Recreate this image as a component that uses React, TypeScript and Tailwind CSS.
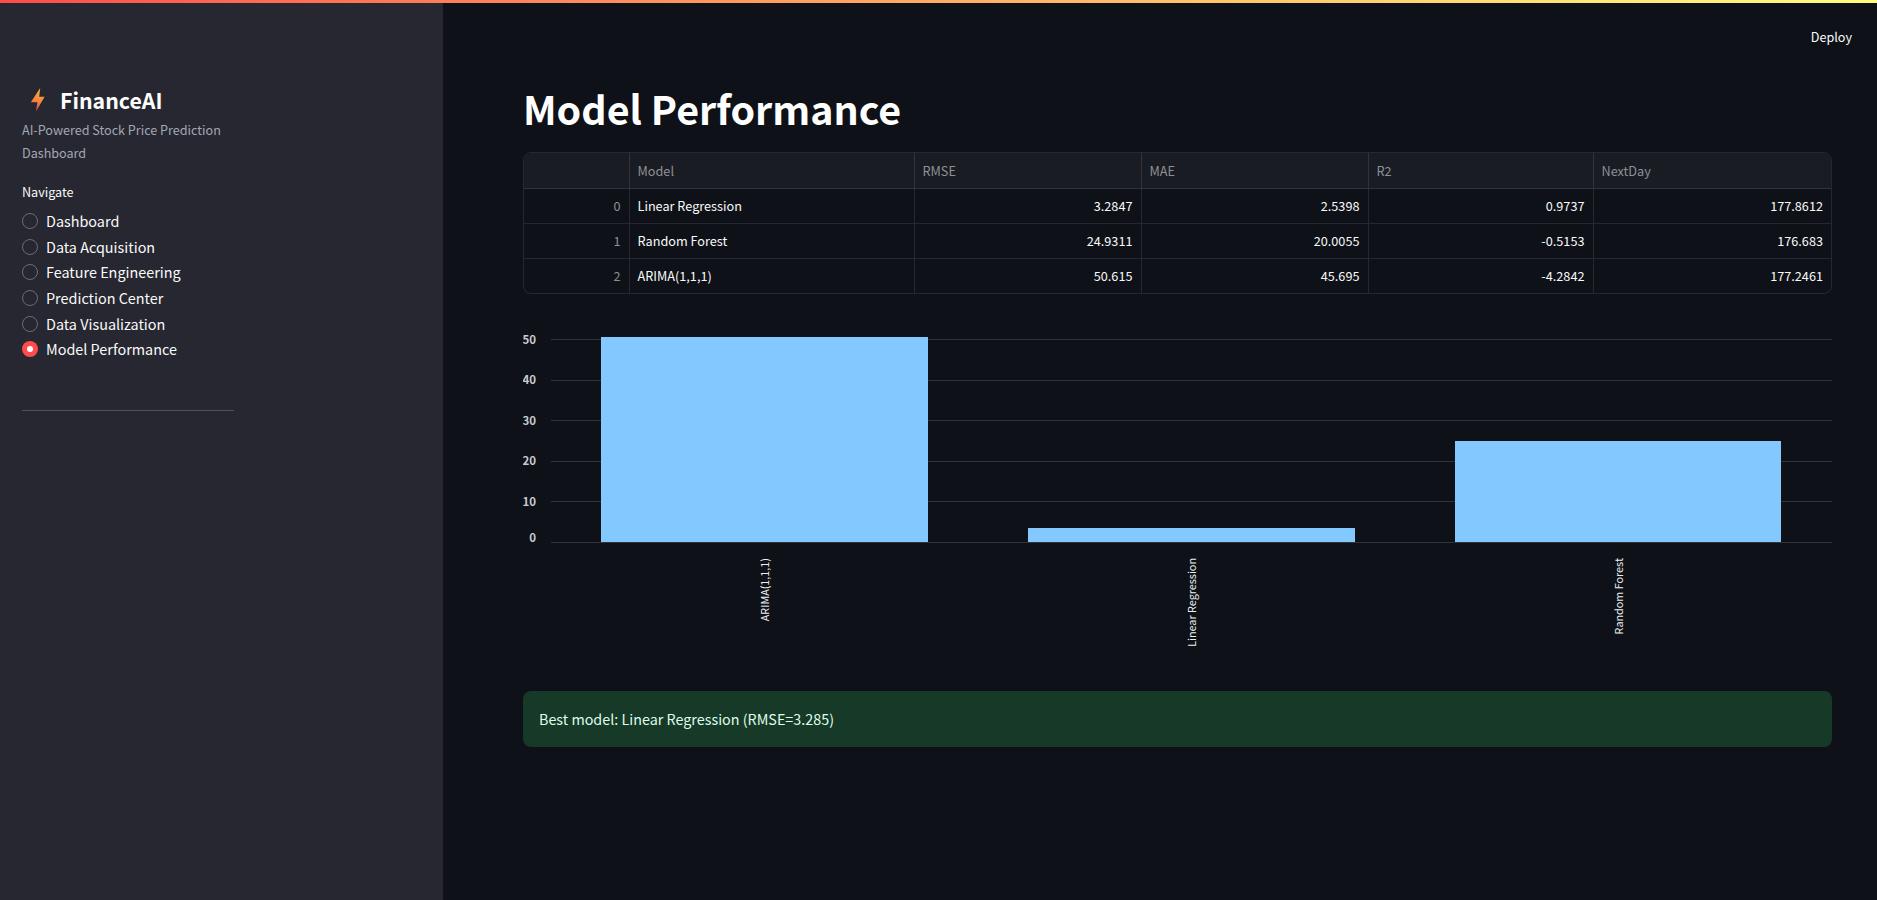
import React from 'react';

const navItems = ['Dashboard', 'Data Acquisition', 'Feature Engineering', 'Prediction Center', 'Data Visualization', 'Model Performance'];

const rows = [
  { id: 0, model: 'Linear Regression', rmse: '3.2847', mae: '2.5398', r2: '0.9737', next: '177.8612' },
  { id: 1, model: 'Random Forest', rmse: '24.9311', mae: '20.0055', r2: '-0.5153', next: '176.683' },
  { id: 2, model: 'ARIMA(1,1,1)', rmse: '50.615', mae: '45.695', r2: '-4.2842', next: '177.2461' },
];

const headers = ['', 'Model', 'RMSE', 'MAE', 'R2', 'NextDay'];

const Bolt: React.FC = () => (
  <svg width="16" height="24" viewBox="0 0 16 24" className="shrink-0">
    <defs>
      <linearGradient id="bolt" x1="0.6" y1="0" x2="0.4" y2="1">
        <stop offset="0" stopColor="#fbb040" />
        <stop offset="0.55" stopColor="#f6863f" />
        <stop offset="1" stopColor="#ee3f45" />
      </linearGradient>
    </defs>
    <path d="M10.2 0 L0.8 14.2 L7.4 14.2 L6 23.4 L14.6 8.8 L9.2 8.8 Z" fill="url(#bolt)" />
  </svg>
);

const Chart: React.FC = () => {
  const ticks = [
    { label: '50', y: 19, ty: 24 },
    { label: '40', y: 60, ty: 64 },
    { label: '30', y: 100, ty: 105 },
    { label: '20', y: 141, ty: 145 },
    { label: '10', y: 181, ty: 186 },
    { label: '0', y: 222, ty: 222 },
  ];
  const bars = [
    { x: 78, w: 327, top: 17, label: 'ARIMA(1,1,1)', cx: 242 },
    { x: 505, w: 327, top: 208, label: 'Linear Regression', cx: 669 },
    { x: 932, w: 326, top: 121, label: 'Random Forest', cx: 1096 },
  ];
  return (
    <svg width="1309" height="340" viewBox="0 0 1309 340" className="block">
      {ticks.map((t) => (
        <g key={t.label}>
          <line x1="28" x2="1309" y1={t.y + 0.5} y2={t.y + 0.5} stroke="#31333c" />
          <text x="13" y={t.ty} textAnchor="end" fontSize="11.5" fontWeight="700" fill="#c9cbd1">
            {t.label}
          </text>
        </g>
      ))}
      {bars.map((b) => (
        <g key={b.label}>
          <rect x={b.x} y={b.top} width={b.w} height={222 - b.top} fill="#83c9ff" />
          <text
            x={0}
            y={0}
            transform={`translate(${b.cx + 4} 238) rotate(-90)`}
            textAnchor="end"
            fontSize="10.8"
            fill="#eceef1"
          >
            {b.label}
          </text>
        </g>
      ))}
    </svg>
  );
};

const App: React.FC = () => {
  return (
    <div className="h-[900px] overflow-hidden flex flex-col bg-[#0e1117] text-[#fafafa] font-['Noto_Sans_CJK_SC','Source_Sans_Pro',sans-serif]">
      <div className="h-[3px] shrink-0 bg-gradient-to-r from-[#ff4b4b] to-[#fffd80]" />
      <div className="flex flex-1 min-h-0">
        <aside className="w-[443px] shrink-0 bg-[#262730] pl-[22px] pt-[84px]">
          <div className="flex items-center h-[26px] pl-[8px] gap-[14px]">
            <Bolt />
            <span className="text-[21.3px] leading-[26px] font-bold text-white">FinanceAI</span>
          </div>
          <p className="mt-[5px] w-[230px] text-[12.6px] leading-[23px] text-[#a3a8b4]">AI-Powered Stock Price Prediction Dashboard</p>
          <p className="mt-[18px] text-[12.6px] leading-[20px]">Navigate</p>
          <ul className="mt-[6.5px]">
            {navItems.map((item) => {
              const active = item === 'Model Performance';
              return (
                <li key={item} className="flex items-center h-[25.6px] gap-[8px]">
                  {active ? (
                    <span className="w-[16px] h-[16px] rounded-full bg-[#ff4b4b] flex items-center justify-center">
                      <span className="w-[6px] h-[6px] rounded-full bg-white" />
                    </span>
                  ) : (
                    <span className="w-[16px] h-[16px] rounded-full border border-[#6b6d76]" />
                  )}
                  <span className="text-[14.4px] leading-[20px]">{item}</span>
                </li>
              );
            })}
          </ul>
          <div className="mt-[47.5px] w-[212px] h-px bg-[#50515b]" />
        </aside>
        <main className="flex-1 min-w-0 flex flex-col">
          <div className="h-[68px] shrink-0 flex justify-end items-center pr-[25px]">
            <span className="text-[12.6px] leading-[20px]">Deploy</span>
          </div>
          <div className="pl-[80px] pr-[45px]">
            <h1 className="h-[81px] text-[39.4px] leading-[74px] font-bold text-white">Model Performance</h1>
            <div className="rounded-[8px] border border-[#262730] overflow-hidden">
              <table className="w-full table-fixed text-[12.7px]">
                <colgroup>
                  <col className="w-[105px]" />
                  <col className="w-[285px]" />
                  <col className="w-[227px]" />
                  <col className="w-[227px]" />
                  <col className="w-[225px]" />
                  <col />
                </colgroup>
                <thead>
                  <tr className="h-[35px] bg-[#1a1c24] text-[#8e9096]">
                    {headers.map((h, i) => (
                      <th key={i} className="px-[8px] text-left font-normal border-b border-[#31333c] border-l first:border-l-0">
                        {h}
                      </th>
                    ))}
                  </tr>
                </thead>
                <tbody>
                  {rows.map((r) => (
                    <tr key={r.id} className="h-[35px] border-b last:border-b-0 border-[#262730]">
                      <td className="px-[8px] text-right text-[#8e9096]">{r.id}</td>
                      <td className="px-[8px] border-l border-[#262730]">{r.model}</td>
                      <td className="px-[8px] text-right border-l border-[#262730]">{r.rmse}</td>
                      <td className="px-[8px] text-right border-l border-[#262730]">{r.mae}</td>
                      <td className="px-[8px] text-right border-l border-[#262730]">{r.r2}</td>
                      <td className="px-[8px] text-right border-l border-[#262730]">{r.next}</td>
                    </tr>
                  ))}
                </tbody>
              </table>
            </div>
            <div className="mt-[26px]">
              <Chart />
            </div>
            <div className="mt-[31px] h-[56px] rounded-[8px] bg-[#173928] px-[16px] flex items-center text-[14.35px] text-[#dffde9]">
              Best model: Linear Regression (RMSE=3.285)
            </div>
          </div>
        </main>
      </div>
    </div>
  );
};

export default App;
